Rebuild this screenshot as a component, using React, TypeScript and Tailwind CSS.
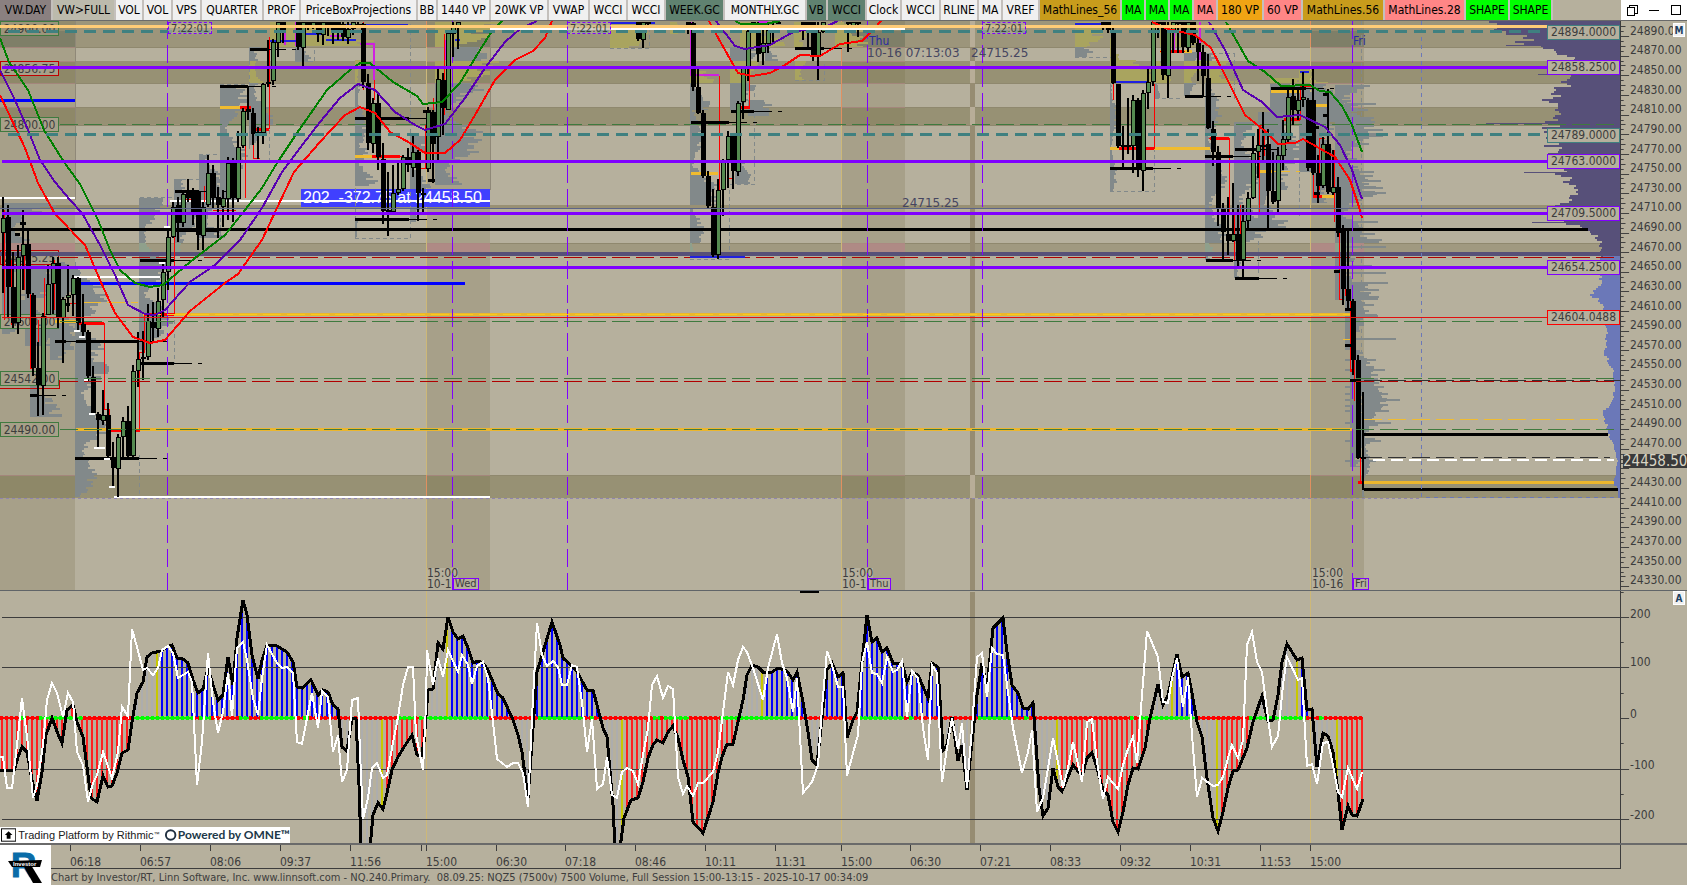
import React from 'react';

type Point = [number, number];
// x, high, low, body top, body bottom, up
type Candle = [number, number, number, number, number, number];

const PLOT_W = 1620;
const PRICE = { top: 21, height: 569 };
const CCI_ZERO = 718;

const studies: { label: string; className: string }[] = [
    { label: 'VW.DAY', className: 'w-[53px] bg-[#8a8080]' },
    { label: 'VW>FULL', className: 'w-[63px] bg-[#bcbaac]' },
    { label: 'VOL', className: 'w-[28px] bg-[#f0f0f0]' },
    { label: 'VOL', className: 'w-[29px] bg-[#f0f0f0]' },
    { label: 'VPS', className: 'w-[29px] bg-[#f0f0f0]' },
    { label: 'QUARTER', className: 'w-[62px] bg-[#f0f0f0]' },
    { label: 'PROF', className: 'w-[37px] bg-[#f0f0f0]' },
    { label: 'PriceBoxProjections', className: 'w-[117px] bg-[#f0f0f0]' },
    { label: 'BB', className: 'w-[20px] bg-[#f0f0f0]' },
    { label: '1440 VP', className: 'w-[53px] bg-[#f0f0f0]' },
    { label: '20WK VP', className: 'w-[58px] bg-[#f0f0f0]' },
    { label: 'VWAP', className: 'w-[41px] bg-[#f0f0f0]' },
    { label: 'WCCI', className: 'w-[38px] bg-[#f0f0f0]' },
    { label: 'WCCI', className: 'w-[38px] bg-[#f0f0f0]' },
    { label: 'WEEK.GC', className: 'w-[59px] bg-[#608270]' },
    { label: 'MONTHLY.GC', className: 'w-[82px] bg-[#f0f0f0]' },
    { label: 'VB', className: 'w-[21px] bg-[#608270]' },
    { label: 'WCCI', className: 'w-[39px] bg-[#608270]' },
    { label: 'Clock', className: 'w-[35px] bg-[#f0f0f0]' },
    { label: 'WCCI', className: 'w-[39px] bg-[#f0f0f0]' },
    { label: 'RLINE', className: 'w-[38px] bg-[#f0f0f0]' },
    { label: 'MA', className: 'w-[24px] bg-[#f0f0f0]' },
    { label: 'VREF', className: 'w-[37px] bg-[#f0f0f0]' },
    { label: 'MathLines_56', className: 'w-[82px] bg-[#c89c1c]' },
    { label: 'MA', className: 'w-[24px] bg-[#00ff00]' },
    { label: 'MA', className: 'w-[24px] bg-[#00ff00]' },
    { label: 'MA', className: 'w-[24px] bg-[#00ff00]' },
    { label: 'MA', className: 'w-[24px] bg-[#ff8686]' },
    { label: '180 VP', className: 'w-[46px] bg-[#f0a414]' },
    { label: '60 VP', className: 'w-[39px] bg-[#ff8686]' },
    { label: 'MathLines.56', className: 'w-[82px] bg-[#c89c1c]' },
    { label: 'MathLines.28', className: 'w-[81px] bg-[#ff8686]' },
    { label: 'SHAPE', className: 'w-[44px] bg-[#00ff00]' },
    { label: 'SHAPE', className: 'w-[43px] bg-[#00ff00]' },
];

const candles: Candle[] = [
    [3, 197, 293, 218, 232, 1], [8, 205, 317, 217, 287, 0], [13, 252, 328, 287, 323, 0], [18, 245, 334, 257, 322, 1],
    [23, 210, 290, 244, 255, 1], [28, 230, 298, 244, 294, 0], [33, 293, 376, 295, 368, 0], [38, 342, 416, 368, 385, 0],
    [43, 313, 415, 316, 385, 1], [48, 265, 315, 284, 314, 1], [53, 257, 314, 263, 283, 1], [58, 257, 328, 263, 317, 0],
    [63, 297, 363, 299, 317, 1], [68, 265, 312, 295, 297, 1], [73, 275, 316, 278, 294, 1], [78, 277, 331, 278, 323, 0],
    [83, 294, 337, 324, 332, 0], [88, 330, 381, 332, 376, 0], [93, 366, 414, 377, 413, 0], [98, 412, 447, 414, 420, 0],
    [103, 390, 425, 415, 420, 1], [108, 403, 458, 415, 456, 0], [113, 442, 487, 457, 468, 0], [118, 434, 497, 437, 468, 1],
    [123, 417, 457, 421, 436, 1], [128, 406, 457, 421, 456, 0], [133, 365, 457, 371, 455, 1], [138, 332, 387, 359, 370, 1],
    [143, 331, 380, 357, 359, 0], [148, 304, 360, 321, 356, 1], [153, 302, 341, 322, 328, 0], [158, 288, 337, 301, 328, 1],
    [163, 264, 317, 272, 299, 1], [168, 226, 290, 237, 271, 1], [173, 202, 238, 207, 236, 1], [178, 197, 242, 205, 223, 0],
    [183, 190, 227, 194, 222, 1], [188, 179, 202, 191, 198, 0], [193, 188, 225, 191, 213, 0], [198, 190, 250, 192, 235, 0],
    [203, 202, 250, 207, 235, 1], [208, 155, 207, 173, 204, 1], [213, 165, 208, 173, 198, 0], [218, 187, 238, 197, 205, 0],
    [223, 190, 227, 198, 206, 1], [228, 157, 220, 163, 198, 1], [233, 158, 222, 163, 198, 0], [238, 131, 202, 147, 198, 1],
    [243, 108, 148, 111, 145, 1], [248, 86, 120, 109, 112, 0], [253, 108, 145, 113, 134, 0], [258, 127, 159, 132, 133, 0],
    [263, 83, 144, 84, 132, 1], [268, 40, 87, 82, 83, 1], [273, 39, 85, 42, 80, 1], [278, 22, 57, 22, 42, 1],
    [283, 22, 43, 22, 30, 0], [298, 22, 50, 22, 47, 0], [303, 22, 66, 22, 47, 1], [308, 22, 30, 22, 27, 0],
    [313, 22, 29, 22, 27, 1], [318, 22, 42, 22, 34, 0], [323, 22, 45, 22, 34, 1], [328, 22, 36, 22, 28, 0],
    [333, 22, 44, 22, 30, 0], [338, 22, 40, 22, 32, 0], [343, 22, 41, 24, 37, 0], [348, 22, 44, 29, 37, 1],
    [353, 22, 35, 22, 28, 1], [358, 22, 28, 24, 26, 0], [363, 23, 88, 24, 82, 0], [368, 74, 150, 83, 143, 0],
    [373, 98, 153, 103, 143, 1], [378, 93, 170, 103, 157, 0], [383, 143, 224, 159, 211, 0], [388, 172, 236, 210, 212, 0],
    [393, 165, 215, 193, 211, 1], [398, 160, 195, 189, 192, 1], [403, 155, 191, 157, 188, 1], [408, 148, 172, 157, 165, 0],
    [413, 136, 177, 152, 167, 1], [418, 150, 221, 152, 193, 0], [423, 188, 213, 193, 195, 0], [428, 107, 172, 112, 168, 1],
    [433, 110, 183, 112, 144, 0], [438, 69, 160, 79, 136, 1], [443, 73, 135, 80, 108, 0], [448, 30, 110, 33, 109, 1],
    [453, 22, 57, 27, 33, 1], [458, 22, 49, 22, 27, 1], [638, 22, 41, 22, 39, 0], [643, 22, 48, 22, 39, 1],
    [648, 22, 28, 22, 24, 0], [688, 22, 34, 22, 26, 0], [693, 22, 91, 23, 87, 0], [698, 68, 114, 87, 113, 0],
    [703, 110, 178, 113, 176, 0], [708, 171, 208, 176, 206, 0], [713, 189, 257, 207, 255, 0], [718, 179, 259, 190, 254, 1],
    [723, 159, 216, 162, 189, 1], [728, 131, 188, 136, 159, 1], [733, 133, 189, 135, 171, 0], [738, 101, 176, 103, 171, 1],
    [743, 67, 119, 68, 101, 1], [748, 29, 81, 31, 68, 1], [753, 22, 30, 22, 24, 0], [758, 22, 62, 32, 54, 0],
    [763, 28, 65, 43, 52, 1], [768, 22, 53, 30, 43, 1], [773, 22, 42, 25, 28, 1], [778, 22, 24, 22, 23, 0],
    [803, 22, 40, 22, 25, 0], [808, 22, 50, 22, 25, 0], [813, 22, 61, 22, 57, 0], [818, 22, 80, 32, 56, 1],
    [823, 22, 33, 22, 31, 1], [848, 22, 52, 22, 24, 0], [853, 22, 26, 22, 25, 1], [858, 22, 37, 22, 24, 0],
    [1103, 22, 30, 22, 28, 0], [1108, 22, 33, 22, 30, 0], [1113, 27, 84, 33, 83, 0], [1118, 84, 148, 84, 146, 0],
    [1123, 126, 168, 145, 147, 0], [1128, 98, 154, 145, 147, 0], [1133, 95, 173, 100, 145, 1], [1138, 98, 177, 100, 170, 0],
    [1143, 90, 191, 93, 170, 1], [1148, 68, 109, 82, 92, 1], [1153, 22, 86, 22, 81, 1], [1158, 22, 38, 22, 24, 0],
    [1163, 22, 80, 22, 75, 0], [1168, 22, 98, 30, 75, 1], [1173, 22, 53, 22, 30, 1], [1178, 22, 53, 22, 24, 0],
    [1183, 22, 53, 22, 47, 0], [1188, 22, 52, 22, 47, 1], [1193, 22, 45, 22, 43, 0], [1198, 38, 81, 43, 52, 0],
    [1203, 45, 97, 52, 76, 0], [1208, 54, 129, 78, 128, 0], [1213, 121, 166, 129, 152, 0], [1218, 146, 226, 152, 208, 0],
    [1223, 203, 259, 209, 232, 0], [1228, 197, 255, 234, 241, 0], [1233, 183, 242, 234, 240, 1], [1238, 205, 266, 234, 260, 0],
    [1243, 205, 277, 221, 259, 1], [1248, 192, 228, 198, 220, 1], [1253, 136, 199, 153, 197, 1], [1258, 129, 178, 145, 151, 1],
    [1263, 112, 163, 145, 146, 0], [1268, 129, 231, 144, 191, 0], [1273, 152, 204, 191, 202, 0], [1278, 147, 212, 155, 200, 1],
    [1283, 120, 170, 139, 155, 1], [1288, 90, 143, 97, 139, 1], [1293, 79, 125, 96, 110, 0], [1298, 89, 120, 100, 110, 1],
    [1303, 72, 107, 97, 99, 1], [1308, 98, 171, 100, 168, 0], [1313, 69, 175, 100, 173, 0], [1318, 155, 203, 173, 186, 0],
    [1323, 137, 188, 144, 185, 1], [1328, 89, 194, 144, 192, 0], [1333, 150, 195, 187, 192, 1], [1338, 177, 237, 187, 233, 0],
    [1343, 225, 305, 231, 289, 0], [1348, 231, 309, 289, 301, 0], [1353, 299, 375, 301, 360, 0], [1358, 355, 459, 360, 458, 0],
    [1363, 392, 490, 457, 459, 0],
];

// base x, top, bottom, reach, colour
const profiles: [number, number, number, number, string][] = [
    [2, 203, 243, 54, '#82898a'], [2, 256, 334, 34, '#82898a'], [25, 262, 346, 38, '#82898a'], [30, 386, 417, 32, '#82898a'],
    [50, 262, 360, 34, '#82898a'], [75, 278, 350, 32, '#82898a'], [75, 350, 455, 34, '#82898a'], [75, 455, 497, 22, '#82898a'],
    [139, 198, 243, 24, '#82898a'], [139, 243, 252, 14, '#8fa08c'], [139, 256, 350, 34, '#82898a'], [174, 179, 243, 34, '#82898a'],
    [174, 243, 252, 24, '#8fa08c'], [199, 155, 238, 32, '#82898a'], [220, 85, 200, 28, '#82898a'], [249, 47, 61, 28, '#82898a'],
    [249, 61, 83, 22, '#a9a45f'], [249, 83, 145, 24, '#82898a'], [270, 22, 47, 60, '#a9a45f'], [295, 47, 62, 18, '#82898a'],
    [300, 22, 46, 90, '#a9a45f'], [355, 60, 83, 12, '#a9a45f'], [355, 83, 148, 12, '#82898a'], [355, 148, 186, 26, '#82898a'],
    [355, 219, 238, 6, '#82898a'], [410, 136, 222, 22, '#82898a'], [435, 22, 47, 76, '#a9a45f'], [453, 47, 61, 34, '#82898a'],
    [435, 61, 83, 64, '#a9a45f'], [435, 83, 185, 52, '#82898a'], [610, 22, 48, 38, '#a9a45f'], [670, 22, 34, 26, '#a9a45f'],
    [690, 61, 83, 24, '#a9a45f'], [690, 83, 110, 20, '#82898a'], [690, 110, 190, 14, '#82898a'], [690, 168, 205, 32, '#82898a'],
    [690, 208, 243, 14, '#82898a'], [690, 243, 252, 8, '#8fa08c'], [730, 47, 61, 30, '#82898a'], [730, 61, 83, 28, '#a9a45f'],
    [730, 83, 110, 26, '#82898a'], [748, 100, 116, 26, '#82898a'], [735, 160, 184, 16, '#82898a'], [740, 22, 47, 60, '#a9a45f'],
    [765, 47, 61, 26, '#82898a'], [794, 22, 47, 32, '#a9a45f'], [795, 61, 80, 24, '#a9a45f'], [835, 22, 47, 34, '#a9a45f'],
    [1075, 22, 47, 28, '#a9a45f'], [1075, 47, 57, 18, '#82898a'], [1110, 38, 83, 16, '#a9a45f'], [1110, 83, 191, 7, '#82898a'],
    [1118, 60, 83, 44, '#a9a45f'], [1155, 61, 83, 22, '#a9a45f'], [1155, 83, 98, 10, '#82898a'], [1184, 52, 61, 34, '#82898a'],
    [1160, 22, 47, 60, '#a9a45f'], [1184, 61, 83, 40, '#a9a45f'], [1184, 83, 96, 18, '#82898a'], [1205, 53, 61, 30, '#82898a'],
    [1210, 61, 83, 50, '#a9a45f'], [1205, 83, 150, 18, '#82898a'], [1205, 150, 243, 22, '#82898a'], [1205, 243, 252, 20, '#8fa08c'],
    [1205, 252, 260, 14, '#82898a'], [1234, 122, 243, 32, '#82898a'], [1234, 252, 278, 16, '#82898a'], [1258, 112, 230, 30, '#82898a'],
    [1270, 78, 83, 34, '#a9a45f'], [1270, 84, 190, 38, '#82898a'], [1299, 70, 83, 50, '#a9a45f'], [1299, 84, 172, 56, '#82898a'],
    [1312, 84, 203, 46, '#82898a'], [1335, 85, 243, 48, '#82898a'], [1335, 243, 252, 40, '#8fa08c'], [1335, 252, 300, 44, '#82898a'],
    [1345, 300, 350, 32, '#82898a'], [1350, 350, 467, 28, '#82898a'], [1363, 380, 432, 26, '#82898a'], [1362, 432, 497, 8, '#82898a'],
];

const profileSpikes: Point[] = [
    [104, 1376], [110, 1368], [162, 1377], [172, 1374], [181, 1381], [187, 1376], [193, 1386], [222, 1378], [247, 1386],
    [266, 1372], [273, 1386], [283, 1388], [290, 1379], [316, 1378], [339, 1396], [360, 1376], [370, 1385], [387, 1384],
    [394, 1388], [400, 1400], [406, 1383], [411, 1389], [423, 1391], [441, 1381], [461, 1376],
];

const greenMa: Point[][] = [
    [[0, 38], [9, 62], [28, 90], [44, 130], [64, 162], [80, 184], [98, 220], [110, 250], [120, 270], [135, 283], [150, 287], [163, 285], [190, 262], [225, 235], [245, 210], [262, 188], [277, 163], [297, 133], [327, 90], [350, 70], [360, 63], [370, 63], [393, 82], [417, 96], [423, 104], [442, 102], [460, 83], [480, 50], [492, 31], [502, 21]],
    [[735, 21], [741, 24], [765, 24], [780, 21]],
    [[1226, 22], [1248, 61], [1265, 72], [1281, 86], [1310, 85], [1320, 91], [1330, 92], [1342, 106], [1352, 125], [1362, 152]],
];
const purpleMa: Point[][] = [
    [[0, 70], [15, 100], [28, 130], [40, 160], [55, 182], [70, 200], [82, 213], [100, 245], [115, 275], [128, 305], [145, 314], [155, 315], [165, 310], [190, 282], [215, 265], [240, 240], [262, 208], [282, 172], [300, 148], [320, 122], [340, 98], [358, 84], [375, 90], [395, 112], [415, 125], [425, 130], [445, 124], [465, 98], [485, 68], [505, 42], [520, 29], [537, 21]],
    [[716, 21], [735, 46], [745, 49], [770, 45], [795, 31], [820, 29], [838, 21]],
    [[1209, 22], [1225, 50], [1243, 90], [1262, 102], [1277, 117], [1300, 115], [1325, 127], [1340, 145], [1352, 170], [1362, 199]],
];
const redMa: Point[][] = [
    [[0, 95], [25, 148], [38, 183], [55, 214], [85, 245], [100, 280], [115, 313], [133, 337], [150, 343], [165, 340], [190, 311], [225, 283], [238, 274], [262, 240], [277, 208], [294, 172], [320, 142], [345, 115], [360, 107], [375, 113], [390, 132], [410, 143], [425, 153], [445, 153], [460, 140], [475, 115], [495, 80], [515, 60], [533, 51], [545, 38], [552, 21]],
    [[709, 21], [721, 43], [738, 73], [752, 76], [770, 73], [785, 65], [800, 55], [820, 56], [840, 44], [862, 41], [873, 30], [881, 21]],
    [[1152, 22], [1168, 29], [1195, 35], [1211, 48], [1225, 75], [1245, 115], [1265, 131], [1278, 144], [1295, 143], [1303, 139], [1335, 157], [1350, 180], [1359, 207], [1362, 218]],
];

// y, x start, x end
const valueLines: [number, number, number][] = [
    [49, 250, 268], [86, 220, 248], [118, 355, 409], [219, 355, 409], [341, 76, 139], [458, 75, 139], [363, 139, 174],
    [260, 140, 174], [230, 174, 219], [191, 175, 198], [122, 691, 729], [111, 731, 754], [48, 795, 824], [168, 1110, 1153],
    [156, 1205, 1233], [260, 1206, 1233], [278, 1235, 1259], [149, 1235, 1259], [96, 1185, 1203], [88, 1271, 1306],
    [395, 30, 38], [341, 55, 66],
];

const cciSlow: Point[] = [
    [0, 770], [14, 771], [18, 757], [22, 747], [27, 752], [32, 780], [37, 801], [42, 772], [46, 735], [52, 718], [58, 734], [62, 743], [67, 710], [73, 705], [77, 722], [83, 737], [87, 767], [91, 798], [97, 802], [103, 776], [108, 787], [112, 786], [117, 773], [122, 753], [128, 750], [132, 722], [137, 693], [143, 682], [147, 657], [152, 653], [161, 651], [167, 647], [172, 645], [177, 658], [183, 659], [188, 663], [193, 680], [198, 693], [203, 689], [208, 668], [213, 685], [218, 700], [223, 695], [228, 657], [233, 685], [237, 638], [243, 600], [247, 615], [252, 655], [258, 679], [262, 660], [267, 645], [277, 646], [287, 652], [293, 662], [297, 687], [302, 688], [311, 680], [318, 695], [323, 690], [328, 692], [333, 705], [338, 709], [342, 747], [347, 751], [352, 718], [356, 718], [359, 785], [361, 848], [370, 848], [373, 815], [378, 803], [383, 809], [387, 793], [392, 770], [398, 757], [404, 747], [412, 735], [417, 755], [421, 757], [424, 742], [428, 690], [433, 689], [438, 643], [443, 649], [448, 617], [453, 632], [458, 639], [463, 636], [468, 648], [473, 663], [478, 661], [483, 663], [488, 670], [498, 694], [503, 698], [513, 720], [518, 735], [522, 752], [528, 798], [532, 742], [537, 672], [543, 652], [552, 622],
    [560, 645], [563, 658], [576, 670], [587, 690], [593, 690], [603, 728], [607, 737], [613, 805], [615, 848], [620, 848], [624, 818], [631, 800], [638, 798], [643, 782], [648, 758], [653, 745], [657, 740], [663, 743], [668, 732], [673, 726], [678, 738], [683, 760], [688, 777], [693, 822], [703, 833], [713, 802], [718, 773], [722, 757], [727, 744], [733, 744], [738, 722], [743, 700], [747, 675], [752, 665], [758, 667], [763, 672], [772, 672], [778, 668], [787, 671], [793, 680], [797, 672], [803, 702], [808, 732], [812, 760], [817, 765], [822, 718], [827, 670], [832, 663], [838, 677], [843, 673], [847, 738], [853, 720], [857, 712], [862, 662], [867, 615], [872, 642], [877, 638], [882, 652], [887, 648], [893, 663], [902, 663], [907, 682], [912, 672], [918, 675], [928, 698], [932, 663], [938, 667], [943, 750], [947, 745], [952, 717], [958, 761], [962, 745], [967, 790], [972, 742], [977, 695], [982, 663], [987, 688], [993, 628], [1003, 618], [1007, 652], [1012, 685], [1018, 693], [1023, 708], [1028, 709], [1033, 703], [1036, 745], [1039, 788], [1043, 816], [1048, 808], [1053, 768], [1058, 787], [1062, 791], [1073, 765], [1082, 776], [1087, 758], [1092, 753], [1097, 768], [1103, 790], [1108, 795], [1113, 822], [1118, 832],
    [1123, 812], [1128, 785], [1133, 768], [1138, 769], [1145, 748], [1150, 718], [1158, 684], [1163, 705], [1168, 695], [1177, 654], [1182, 677], [1188, 673], [1192, 693], [1197, 722], [1202, 737], [1207, 778], [1213, 818], [1218, 831], [1223, 812], [1228, 788], [1233, 771], [1238, 770], [1247, 748], [1253, 722], [1262, 696], [1268, 721], [1273, 720], [1278, 695], [1282, 662], [1287, 644], [1297, 660], [1302, 658], [1307, 710], [1312, 709], [1317, 767], [1323, 733], [1328, 736], [1333, 752], [1338, 792], [1342, 830], [1348, 806], [1352, 815], [1357, 816], [1363, 799],
];

const cciFast: Point[] = [
    [0, 757], [3, 757], [7, 788], [12, 788], [17, 745], [22, 698], [28, 745], [33, 798], [37, 785], [43, 745], [47, 700], [52, 683], [57, 693], [63, 717], [68, 693], [73, 702], [77, 752], [83, 765], [88, 802], [93, 783], [97, 775], [103, 752], [112, 778], [118, 752], [122, 707], [128, 716], [132, 629], [137, 647], [143, 670], [147, 668], [153, 675], [158, 668], [162, 650], [168, 646], [173, 653], [178, 678], [188, 672], [192, 682], [197, 785], [202, 742], [208, 653], [213, 702], [218, 733], [223, 712], [228, 673], [232, 716], [237, 648], [243, 642], [247, 660], [253, 698], [258, 715], [262, 678], [267, 645], [277, 663], [282, 668], [287, 667], [293, 673], [297, 742], [302, 744], [307, 718], [312, 693], [318, 728], [322, 691], [328, 697], [333, 752], [338, 735], [342, 782], [347, 770], [352, 700], [358, 698], [360, 752], [363, 819], [368, 798], [372, 768], [377, 763], [383, 778], [387, 775], [392, 748], [398, 717], [403, 685], [408, 667], [413, 667], [416, 735], [423, 770], [426, 705], [427, 650], [433, 685], [438, 658], [443, 677], [448, 650], [458, 672], [462, 655], [468, 665], [472, 684], [477, 666], [483, 662], [488, 678], [493, 722], [497, 759], [507, 767], [513, 763], [518, 763], [523, 773], [528, 807], [532, 718], [537, 623], [542, 655], [547, 666], [553, 661], [558, 667],
    [562, 685], [567, 685], [572, 665], [577, 667], [582, 702], [587, 752], [592, 719], [597, 789], [603, 784], [607, 757], [612, 795], [617, 798], [622, 772], [627, 768], [633, 771], [638, 784], [643, 755], [648, 728], [652, 685], [657, 676], [663, 698], [668, 686], [673, 689], [678, 777], [683, 794], [687, 786], [693, 796], [698, 783], [703, 783], [713, 772], [718, 752], [723, 712], [728, 672], [733, 685], [738, 660], [743, 647], [747, 652], [753, 668], [763, 700], [768, 668], [777, 634], [782, 663], [787, 678], [793, 712], [797, 678], [803, 793], [812, 782], [818, 765], [822, 708], [827, 651], [832, 665], [838, 687], [843, 687], [847, 776], [853, 753], [858, 735], [862, 663], [867, 642], [872, 673], [877, 674], [882, 683], [887, 657], [893, 672], [897, 670], [902, 661], [907, 717], [912, 671], [918, 678], [923, 728], [928, 760], [932, 665], [937, 673], [942, 782], [947, 748], [952, 718], [958, 749], [962, 723], [967, 788], [972, 728], [977, 657], [982, 653], [987, 697], [992, 648], [997, 654], [1003, 655], [1007, 685], [1013, 728], [1022, 773], [1028, 752], [1032, 730], [1037, 812], [1043, 798], [1053, 738], [1058, 762], [1063, 788], [1068, 768], [1073, 742], [1082, 782], [1087, 722], [1092, 719], [1097, 762], [1103, 799], [1108, 777], [1118, 789],
    [1123, 765], [1127, 752], [1133, 737], [1137, 763], [1142, 695], [1147, 631], [1158, 657], [1163, 702], [1168, 703], [1172, 678], [1177, 658], [1183, 707], [1188, 677], [1192, 735], [1197, 797], [1202, 778], [1213, 786], [1218, 785], [1223, 777], [1228, 758], [1232, 745], [1238, 758], [1243, 740], [1247, 645], [1252, 632], [1257, 662], [1262, 672], [1268, 718], [1272, 747], [1278, 736], [1283, 685], [1287, 657], [1298, 680], [1302, 678], [1307, 766], [1312, 764], [1317, 784], [1323, 743], [1328, 742], [1333, 765], [1338, 792], [1342, 797], [1348, 768], [1357, 789], [1362, 772],
];

const BLUE = '#0000ff';
const RED = '#ff2020';
const GRAY = '#adadad';
const YELLOW = '#c8c800';
// last x of each run of bars
const barRuns: [number, string][] = [
    [132, RED], [152, GRAY], [157, YELLOW], [338, BLUE], [378, GRAY], [382, YELLOW], [423, RED], [443, GRAY], [447, YELLOW],
    [508, BLUE], [534, GRAY], [598, BLUE], [618, GRAY], [622, YELLOW], [738, RED], [758, GRAY], [762, YELLOW], [803, BLUE],
    [823, GRAY], [843, BLUE], [858, GRAY], [938, BLUE], [973, GRAY], [1033, BLUE], [1053, GRAY], [1057, YELLOW], [1148, RED],
    [1168, GRAY], [1172, YELLOW], [1193, BLUE], [1213, GRAY], [1217, YELLOW], [1248, RED], [1293, GRAY], [1297, YELLOW],
    [1308, BLUE], [1333, GRAY], [1337, YELLOW], [1363, RED],
];
// the zero line alternates red and green at these x values
const zeroSwitches = [
    0, 20, 26, 39, 83, 131, 193, 199, 211, 239, 249, 260, 297, 303, 309, 398, 414, 419, 489, 538, 584, 590, 594, 653, 660, 664,
    689, 720, 799, 859, 904, 909, 914, 978, 1013, 1024, 1029, 1130, 1134, 1140, 1197, 1249, 1306, 1319, 1324, 1363,
];

const priceLabels = Array.from({ length: 29 }, (_, i) => (24890 - i * 20).toFixed(2));
const times = [
    { x: 70, label: '06:18' }, { x: 140, label: '06:57' }, { x: 210, label: '08:06' }, { x: 280, label: '09:37' },
    { x: 350, label: '11:56' }, { x: 421, label: '' }, { x: 426, label: '15:00' }, { x: 496, label: '06:30' },
    { x: 565, label: '07:18' }, { x: 635, label: '08:46' }, { x: 705, label: '10:11' }, { x: 775, label: '11:31' },
    { x: 841, label: '15:00' }, { x: 910, label: '06:30' }, { x: 980, label: '07:21' }, { x: 1050, label: '08:33' },
    { x: 1120, label: '09:32' }, { x: 1190, label: '10:31' }, { x: 1260, label: '11:53' }, { x: 1310, label: '15:00' },
];

const leftTags = [
    { y: 21, text: '24900.00', className: 'border-[#3f7a3f] bg-[#9c957b]' },
    { y: 61, text: '24856.75', className: 'border-[#c00000] bg-[#a7a089]' },
    { y: 117, text: '24800.00', className: 'border-[#3f7a3f] bg-[#a7a089]' },
    { y: 250, text: '24665.25', className: 'border-[#c00000] bg-[#a7a089]' },
    { y: 314, text: '24600.00', className: 'border-[#3f7a3f] bg-[#a7a089]' },
    { y: 371, text: '24542.00', className: 'border-[#3f7a3f] bg-[#a7a089]' },
    { y: 422, text: '24490.00', className: 'border-[#3f7a3f] bg-[#a7a089]' },
];
const rightTags = [
    { y: 25, text: '24894.0000', className: 'border-[#3f8080]' },
    { y: 60, text: '24858.2500', className: 'border-[#8000ff]' },
    { y: 128, text: '24789.0000', className: 'border-[#3f8080]' },
    { y: 154, text: '24763.0000', className: 'border-[#8000ff]' },
    { y: 206, text: '24709.5000', className: 'border-[#8000ff]' },
    { y: 260, text: '24654.2500', className: 'border-[#8000ff]' },
    { y: 310, text: '24604.0488', className: 'border-[#ff0000]' },
];
const sessions = [
    { x: 427, date: '10-15', day: 'Wed', dayX: 453 },
    { x: 842, date: '10-16', day: 'Thu', dayX: 868 },
    { x: 1312, date: '10-16', day: 'Fri', dayX: 1353 },
];

const left = (x: number) => `${(x / PLOT_W) * 100}%`;
const top = (y: number) => `${((y - PRICE.top) / PRICE.height) * 100}%`;
const toPoints = (pts: Point[]) => pts.map((p) => p.join(',')).join(' ');
const noise = (n: number) => {
    const v = Math.sin(n * 12.9898) * 43758.5453;
    return v - Math.floor(v);
};

function lineAt(pts: Point[], x: number) {
    for (let i = 1; i < pts.length; i++) {
        if (pts[i][0] >= x) {
            const [x0, y0] = pts[i - 1];
            const [x1, y1] = pts[i];
            return y0 + ((y1 - y0) * (x - x0)) / (x1 - x0 || 1);
        }
    }
    return pts[pts.length - 1][1];
}

function profilePath(x: number, y0: number, y1: number, reach: number) {
    let d = `M${x},${y0}`;
    for (let y = y0; y < y1; y += 2) {
        const hump = 0.6 + 0.35 * Math.sin((y - y0) / 9 + x);
        const w = Math.round(reach * Math.min(1, hump * (0.6 + 0.6 * noise(y + x))));
        d += `L${x + w},${y}V${Math.min(y + 2, y1)}`;
    }
    return `${d}H${x}Z`;
}

function marketEdge(pts: Point[]) {
    const first = pts[0][0];
    const last = pts[pts.length - 1][0];
    let d = `M${PLOT_W},${first}`;
    for (let y = first; y < last; y += 2) {
        const x = lineAt(pts, y);
        const jag = (PLOT_W - x) * 0.25 * noise(y * 3);
        d += `L${Math.round(x + jag)},${y}v2`;
    }
    return `${d}H${PLOT_W}Z`;
}

const upperEdge: Point[] = [
    [21, 1488], [25, 1484], [31, 1480], [35, 1500], [47, 1525], [55, 1560], [60, 1572], [72, 1566], [85, 1556], [95, 1544],
    [105, 1538], [115, 1545], [130, 1540], [150, 1545], [165, 1545], [175, 1556], [190, 1574], [200, 1556], [206, 1545],
    [223, 1564], [229, 1584], [240, 1598], [256, 1599],
];
const lowerEdge: Point[] = [
    [256, 1600], [270, 1602], [285, 1596], [295, 1588], [300, 1596], [310, 1602], [330, 1606], [352, 1602], [370, 1612], [385, 1614],
    [400, 1612], [409, 1602], [418, 1602], [430, 1606], [445, 1613], [460, 1617], [478, 1614], [482, 1607], [486, 1617], [497, 1618],
];

function PriceBackdrop() {
    return (
        <svg className="block h-full w-full" viewBox="0 21 1620 569" preserveAspectRatio="none" shapeRendering="crispEdges" aria-hidden="true">
            <rect x="0" y="21" width="1620" height="26" fill="#9c957b" />
            <rect x="0" y="61" width="1620" height="22" fill="#979174" />
            <rect x="0" y="107" width="1620" height="18" fill="#979174" />
            <rect x="0" y="205" width="1620" height="4" fill="#989074" />
            <rect x="0" y="243" width="1620" height="13" fill="#a09980" />
            <rect x="0" y="475" width="1620" height="23" fill="#979174" />
            <path d="M0,47.5H1620M0,83.5H1620M0,107.5H1620M0,125.5H1620M0,243.5H1620M0,475.5H1620" stroke="#8f886e" strokeWidth="1" />
            {[[0, 75], [426, 64], [841, 64], [1310, 54]].map(([x, w]) => (
                <g key={x}>
                    <rect x={x} y="21" width={w} height="569" fill="#6e643c" fillOpacity="0.2" />
                    <rect x={x} y="31" width={w} height="16" fill="#7f7f68" />
                    <rect x={x} y="243" width={w} height="9" fill="#b58a8a" fillOpacity="0.8" />
                    <path d={`M${x},47.5h${w}M${x},61.5h${w}M${x},83.5h${w}M${x},107.5h${w}M${x},475.5h${w}`} stroke="#b58a8a" strokeOpacity="0.6" />
                </g>
            ))}
            <path d="M426.5,21V590M841.5,21V590M1310.5,21V590" stroke="#cdb878" />
            <path d="M426.5,21V47M841.5,21V125M1310.5,21V47M426.5,475V498M841.5,475V498M1310.5,475V498" stroke="#e09060" />
            <rect x="970" y="21" width="5" height="569" fill="#968c72" />
            <path d="M972.5,21V47M972.5,61V83M972.5,107V125M972.5,475V498" stroke="#b8ad98" strokeWidth="5" />
            <path d="M490.5,21V190" stroke="#8f8878" />
            <path d="M75.5,21V200" stroke="#8f8878" />
            {profiles.map(([x, y0, y1, reach, fill], i) => (
                <path key={i} d={profilePath(x, y0, y1, reach)} fill={fill} />
            ))}
            {profileSpikes.map(([y, x]) => (
                <path key={y} d={`M1345,${y}H${x}`} stroke="#82898a" strokeWidth="2" />
            ))}
            <path d="M0,388.5H59V380" fill="none" stroke="#c00000" />
        </svg>
    );
}

function PriceDrawing() {
    return (
        <svg className="pointer-events-none absolute inset-0 h-full w-full" viewBox="0 21 1620 569" preserveAspectRatio="none" shapeRendering="crispEdges" fill="none" role="img" aria-label="NQ price chart">
            <path
                d="M139.5,197H174M174.5,179H199V240M199,154.5H220V240M220,84.5H248M249.5,47V150M269.5,130V160M314.5,50V62M355.5,83V238H410V22M610,48.5H649V30M730,184.5H754V85M729.5,190V259H690M795,80.5H824V62M1075,57.5H1112M1110,191.5H1154V140M1155,98.5H1183M1205,53.5H1234V100M1258,122V275M1299.5,170V216M1361.5,21V430M75.5,262V497M139.5,455V497M174.5,320V363"
                stroke="#82898a"
                strokeDasharray="4 3"
            />
            <path d={marketEdge(upperEdge)} fill="#575079" />
            <path d="M1486,123.5H1560M1524,172.5H1570M1532,222.5H1580M1538,74.5H1570M1506,45.5H1545M1494,30.5H1520M1526,161.5H1560" stroke="#575079" strokeWidth="1" />
            <path d={marketEdge(lowerEdge)} fill="#6b78b8" />

            <rect x="0" y="252" width="1603" height="4" fill="#575078" />
            <path d="M60,257.5H1620" stroke="#b00000" strokeDasharray="18 6" />
            <path d="M60,124.5H1620" stroke="#3f7a3f" strokeDasharray="18 6" />
            <path d="M0,100.5H75M81,283.5H465" stroke="#0000ff" strokeWidth="3" />
            <path d="M0,198H75M73,277H160M170,201H490M114,497H490" stroke="#ffffff" strokeWidth="2" />
            <path d="M10,229.5H1588" stroke="#000000" strokeWidth="3" />

            <path d="M143,314.5H1350M76,429.5H1352" stroke="#ebb62d" strokeWidth="3" />
            <path d="M1364,482.5H1614" stroke="#ebb62d" strokeWidth="3" />
            <path d="M220,107H250M355,156.5H372M691,173.5H718M1110,148.5H1210M1271,91.5H1300M1314,105.5H1327M1260,171.5H1272M1313,196.5H1335M1160,51.5H1192M55,321.5H78" stroke="#f0bc30" strokeWidth="3" />
            <path d="M83,302.5H138M1272,171.5H1300M1343,339.5H1356M1364,419.5H1605" stroke="#f0bc30" strokeDasharray="18 6" />

            <path
                d="M78,323.5H104.5V409H109V431.5H139.5V352H144.5V314.5H174.5V235M4.5,210V320M11.5,260V325M24.5,255V290M30.5,290V368H34M38.5,368V320M44.5,278V316H47M54.5,260V310M62,303.5H76M183,199.5H192M204.5,186V202M213,210.5H236M245.5,198V107H251M253.5,110V158H260M269.5,129V37M363.5,22V90M374.5,43V100M372,156.5H402M418,168.5H425.5V125M433.5,98V140M444.5,34V115M691.5,40V76M719.5,76V190M729,178.5H733M749.5,60V107H741M1113.5,40V100M1120,148.5H1154.5V84M1160,51.5H1185M1209,138.5H1229.5V212M1234.5,215V260M1259.5,212V125H1264M1264.5,130V156M1284,119.5H1300V86M1300,86H1312M1313.5,105V196H1318M1319.5,190V138H1325M1334.5,150V222M1339.5,233V299H1344M1345.5,260V296M1350.5,301V370M1354.5,360V401M1360.5,458V482M1240.5,205V258"
                stroke="#ff0000"
            />
            <path d="M78,323H104M109,430.5H139M144,314.5H174M251,129.5H269M372,156.5H400M240,107H251M741,107.5H750M1119,148.5H1154M1210,138.5H1229M1284,119.5H1300M1161,51.5H1184M1313,196.5H1322M1350,370.5H1354M1358,482.5H1364" stroke="#ff0000" strokeWidth="3" />
            <path d="M360,43.5H374V80M690.5,22V75H719M284.5,22V45M295.5,22V46M445.5,40V60M1173.5,22V50M1199.5,22V60M330,36H350M758,22H768" stroke="#d020e0" strokeWidth="2" />
            <path d="M270,40.5H302M300,34H322M326,39.5H356M345,24.5H408M455,40H460M610,22.5H655M690,257H745M1075,23.5H1104M1115,81.5H1148M1300,71.5H1309" stroke="#2020e0" strokeWidth="2" />

            {valueLines.map(([y, x0, x1]) => (
                <g key={`${y}-${x0}`} stroke="#000000">
                    <path d={`M${x0},${y + 0.5}H${x1}`} strokeWidth="3" />
                    <path d={`M${x1},${y + 0.5}h28`} strokeDasharray="18 6" />
                </g>
            ))}
            <path d="M1364,380.5H1620M1364,457.5H1610" stroke="#333333" strokeDasharray="18 6" />
            <path d="M1364,434.5H1608M1364,489.5H1618" stroke="#000000" strokeWidth="3" />
            <path d="M1373,460H1614" stroke="#ffffff" strokeWidth="2" strokeDasharray="12 6" />
            <path d="M1421.5,21V497H1620" stroke="#6b78b8" strokeDasharray="4 4" />
            <path d="M0,498.5H1421" stroke="#8f84b0" strokeDasharray="3 3" />

            <path d="M167.5,21V590M452.5,21V590M567.5,21V590M867.5,21V590M982.5,21V590M1352.5,21V590" stroke="#8000ff" strokeDasharray="18 6" />

            {candles.map(([x, high, low, open, close, up]) => (
                <g key={x}>
                    <rect x={x - 1} y={high} width="2" height={low - high} fill="#000000" />
                    {up ? (
                        <rect x={x - 1.5} y={open + 0.5} width="4" height={Math.max(close - open, 1)} fill="#558a50" stroke="#000000" />
                    ) : (
                        <rect x={x - 2} y={open} width="5" height={Math.max(close - open, 2)} fill="#000000" />
                    )}
                </g>
            ))}
            <path d="M15,234.5h5M20,223.5h6M66,304h4M1311,127.5h8M1323,94.5h6M1323,115.5h6M1314,193.5h6M1334,271.5h6M1345,309.5h6M1345,345.5h6M1350,380.5h6M428,180.5h7M423,111.5h8" stroke="#000000" strokeWidth="3" />
            <path d="M74,331h6M79,337h6M84,380h4M89,414h6M94,448h11M104,459h6M109,487h6M159,263h6M164,227h6" stroke="#ffffff" strokeWidth="2" />

            <path d="M143,314.5H1350" stroke="#f7ca20" strokeDasharray="18 6" />
            <path d="M60,429.5H1620M60,378.5H1620M60,321.5H1545" stroke="#3f7a3f" strokeDasharray="18 6" />
            <path d="M60,381.5H1620" stroke="#b00000" strokeDasharray="18 6" />
            <path d="M0,208.5H1687" stroke="#5c6488" />
            <path d="M2,317.5H1548" stroke="#e01010" />

            {greenMa.map((pts, i) => <polyline key={i} points={toPoints(pts)} stroke="#008000" strokeWidth="2" />)}
            {purpleMa.map((pts, i) => <polyline key={i} points={toPoints(pts)} stroke="#5800b0" strokeWidth="2" />)}
            {redMa.map((pts, i) => <polyline key={i} points={toPoints(pts)} stroke="#ff0000" strokeWidth="2" />)}

            <path d="M0,26.5H1548" stroke="#ffcc77" strokeWidth="3" />
            <path d="M490,29H905" stroke="#ffffff" strokeWidth="2" />
            <path d="M8,31.5H1540M8,134.5H1540" stroke="#3f8080" strokeWidth="3" strokeDasharray="12 7" />
            <path d="M2,67.5H1548M2,161.5H1548M2,213.5H1548M2,267.5H1548" stroke="#8000ff" strokeWidth="3" />
        </svg>
    );
}

function CciDrawing() {
    const bars = Array.from({ length: 273 }, (_, i) => 2 + i * 5);
    return (
        <svg className="block h-full w-full" viewBox="0 591 1620 252" preserveAspectRatio="none" shapeRendering="crispEdges" fill="none" role="img" aria-label="CCI histogram">
            <path d="M426.5,591V843M841.5,591V843M1310.5,591V843" stroke="#cdb878" />
            <rect x="970" y="592" width="5" height="251" fill="#968c72" />
            <path d="M800,592H819" stroke="#000000" strokeWidth="2" />
            {bars.map((x) => {
                const run = barRuns.find(([end]) => x <= end);
                return <path key={x} d={`M${x},${CCI_ZERO}V${lineAt(cciSlow, x)}`} stroke={run ? run[1] : GRAY} strokeWidth="2" />;
            })}
            <path d="M2,617.5H1620M2,667.5H1620M2,769.5H1620M2,819.5H1620" stroke="#3c3c3c" />
            {zeroSwitches.slice(1).map((x, i) => (
                <g key={x} stroke={i % 2 ? '#00ff00' : '#ff0000'}>
                    <path d={`M${zeroSwitches[i]},${CCI_ZERO}H${x}`} strokeWidth="2" />
                    <path d={`M${zeroSwitches[i]},${CCI_ZERO}H${x}`} strokeWidth="4" strokeDasharray="3 2" />
                </g>
            ))}
            <polyline points={toPoints(cciSlow)} stroke="#000000" strokeWidth="3" />
            <polyline points={toPoints(cciFast)} stroke="#ffffff" strokeWidth="2" />
        </svg>
    );
}

function PriceTicks() {
    let d = '';
    for (let i = -2; i < 113; i++) {
        const y = 36 + i * 4.913;
        const w = i % 4 === 0 ? 9 : i % 2 === 0 ? 5 : 3;
        d += `M0,${Math.round(y) + 0.5}h${w}`;
    }
    return (
        <svg className="block h-full w-2.5 shrink-0 border-l border-[#3c3c3c]" viewBox="0 21 10 569" preserveAspectRatio="none" shapeRendering="crispEdges" aria-hidden="true">
            <path d={d} stroke="#3c3c3c" />
        </svg>
    );
}

function Toolbar() {
    return (
        <header className="flex h-[21px] shrink-0 border-b border-[#6a6a6a] bg-[#b6b09d]">
            <nav className="flex min-w-0 flex-1 overflow-hidden" aria-label="Studies">
                {studies.map((s, i) => (
                    <button key={i} type="button" className={`h-5 shrink-0 overflow-visible border-r-2 border-[#c4c0bc] text-center text-[12px] leading-5 whitespace-nowrap text-black ${s.className}`}>
                        {s.label}
                    </button>
                ))}
            </nav>
            <div className="flex w-[66px] shrink-0 items-center justify-around bg-white">
                <button type="button" aria-label="Restore">
                    <svg width="11" height="11" viewBox="0 0 11 11" fill="none" stroke="#000" shapeRendering="crispEdges">
                        <path d="M0.5,2.5h7v8h-7zM2.5,2.5v-2h8v8h-3" />
                    </svg>
                </button>
                <button type="button" aria-label="Minimize">
                    <svg width="11" height="11" viewBox="0 0 11 11" stroke="#000" shapeRendering="crispEdges">
                        <path d="M0,5.5h10" />
                    </svg>
                </button>
                <button type="button" aria-label="Maximize">
                    <svg width="11" height="11" viewBox="0 0 11 11" fill="none" stroke="#000" shapeRendering="crispEdges">
                        <path d="M0.5,0.5h9v9h-9z" />
                    </svg>
                </button>
            </div>
        </header>
    );
}

function PricePanel() {
    return (
        <section className="flex min-h-0 flex-[569]">
            <div className="relative min-w-0 flex-1 overflow-hidden">
                <PriceBackdrop />
                {leftTags.map((t) => (
                    <span key={t.text} className={`absolute left-0 h-[15px] w-[59px] border text-center text-[12px] leading-[14px] ${t.className}`} style={{ top: top(t.y) }}>
                        {t.text}
                    </span>
                ))}
                <span className="absolute h-[18px] w-[189px] bg-[#4040ff] px-0.5 font-['Liberation_Sans'] text-[16px] leading-[18px] whitespace-pre text-white" style={{ left: left(301), top: top(189) }}>
                    202  -372.75 at 24458.50
                </span>
                {sessions.map((s) => (
                    <React.Fragment key={s.day}>
                        <span className="absolute bg-[#b6b09d] text-[12px] leading-[11px]" style={{ left: left(s.x), top: top(568) }}>
                            15:00
                            <br />
                            {s.date}
                        </span>
                        <span className="absolute border border-[#8000ff] bg-[#b6b09d] px-px text-[11px] leading-[10px]" style={{ left: left(s.dayX), top: top(578) }}>
                            {s.day}
                        </span>
                    </React.Fragment>
                ))}
                <PriceDrawing />
                {[168, 567, 982].map((x) => (
                    <span key={x} className="absolute h-3 w-11 border border-dashed border-[#8000ff] bg-[#b6b09d]/60 text-center text-[11px] leading-[11px]" style={{ left: left(x), top: top(22) }}>
                        7:22:01
                    </span>
                ))}
                <span className="absolute text-[12px] leading-[12px] text-[#2a2aa0]" style={{ left: left(869), top: top(35) }}>Thu</span>
                <span className="absolute text-[12px] leading-[12px] text-[#2a2aa0]" style={{ left: left(1353), top: top(35) }}>Fri</span>
                <span className="absolute font-['DejaVu_Sans'] text-[12px] leading-[12px] whitespace-pre text-[#454560]" style={{ left: left(867), top: top(47) }}>
                    10-16 07:13:03   24715.25
                </span>
                <span className="absolute font-['DejaVu_Sans'] text-[12px] leading-[12px] text-[#454560]" style={{ left: left(902), top: top(197) }}>
                    24715.25
                </span>
                {rightTags.map((t) => (
                    <span key={t.text} className={`absolute right-0 h-[15px] w-[73px] border bg-[#b6b09d] text-center text-[12px] leading-[13px] ${t.className}`} style={{ top: top(t.y) }}>
                        {t.text}
                    </span>
                ))}
            </div>
            <div className="relative flex w-[67px] shrink-0 overflow-hidden">
                <PriceTicks />
                <ol className="flex flex-1 flex-col text-[12px] leading-none">
                    {priceLabels.map((p) => (
                        <li key={p} className="flex flex-1 items-center">{p}</li>
                    ))}
                </ol>
                <output className="absolute right-0 h-3.5 w-16 bg-[#3a3a3a] text-right text-[15px] leading-[14px] text-[#d8d4c4]" style={{ top: top(454) }}>
                    24458.50
                </output>
                <button type="button" className="absolute top-0.5 right-0.5 h-3.5 w-3 border border-white bg-[#f0f0f0] text-[10px] leading-[11px] font-bold text-[#204060]">
                    M
                </button>
            </div>
        </section>
    );
}

function CciPanel() {
    return (
        <section className="flex min-h-0 flex-[252]">
            <div className="relative min-w-0 flex-1 overflow-hidden">
                <CciDrawing />
                <div className="absolute bottom-0 left-0 flex h-4 w-[290px] items-center bg-white pl-px font-['Liberation_Sans'] whitespace-nowrap text-[#202020]">
                    <svg width="16" height="14" viewBox="0 0 16 14" aria-hidden="true">
                        <rect x="0.5" y="0.5" width="15" height="13" fill="#fff" stroke="#000" />
                        <path d="M8,3L12,7H10V11H6V7H4Z" fill="#000" />
                    </svg>
                    <span className="ml-0.5 text-[11px]">Trading Platform by Rithmic<sup className="text-[6px]">™</sup></span>
                    <svg className="ml-1" width="14" height="14" viewBox="0 0 14 14" aria-hidden="true">
                        <circle cx="7" cy="7" r="5" fill="none" stroke="#203040" strokeWidth="2" />
                    </svg>
                    <span className="ml-px font-['Lato'] text-[12px] font-bold text-[#203848]">Powered by OMNE™</span>
                </div>
            </div>
            <div className="relative flex w-[67px] shrink-0">
                <svg className="block h-full w-2.5 shrink-0 border-l border-[#3c3c3c]" viewBox="0 591 10 252" preserveAspectRatio="none" shapeRendering="crispEdges" aria-hidden="true">
                    <path d="M0,592.5h3M0,617.5h9M0,642.5h3M0,667.5h9M0,693.5h3M0,718.5h9M0,743.5h3M0,769.5h9M0,794.5h3M0,819.5h9" stroke="#3c3c3c" />
                </svg>
                <ol className="grid flex-1 grid-rows-[45fr_52fr_51fr_51fr_50fr_3fr] items-center text-[12px] leading-none">
                    {[200, 100, 0, -100, -200].map((v) => (
                        <li key={v}>{v}</li>
                    ))}
                </ol>
                <button type="button" className="absolute top-0 right-0.5 h-3.5 w-3 border border-white bg-[#f0f0f0] text-[10px] leading-[11px] font-bold text-[#204060]">
                    A
                </button>
            </div>
        </section>
    );
}

function Footer() {
    const edges = [51, ...times.map((t) => t.x), PLOT_W];
    const columns = edges.slice(1).map((x, i) => `${x - edges[i]}fr`).join(' ');
    return (
        <footer className="flex h-[42px] shrink-0 border-t-2 border-[#6a6a6a]">
            <div className="w-[51px] shrink-0 bg-white">
                <svg width="51" height="40" viewBox="0 0 51 40" role="img" aria-label="Investor/RT">
                    <text x="11" y="32" fontFamily="Liberation Sans" fontWeight="bold" fontSize="35" fill="#0a6ca8" stroke="#0a6ca8">R</text>
                    <path d="M23,20H31L42,38H33Z" fill="#000" />
                    <path d="M8,16L42,15L40,22H12Z" fill="#000" />
                    <text x="13" y="21" fontFamily="Liberation Sans" fontWeight="bold" fontSize="6" fill="#fff">Investor</text>
                </svg>
            </div>
            <div className="min-w-0 flex-1">
                <div className="mr-[66px] grid h-6 border-r border-b border-[#3c3c3c]" style={{ gridTemplateColumns: columns }}>
                    <span />
                    {times.map((t) => (
                        <div key={t.x} className="min-w-0">
                            <div className="h-1.5 w-px bg-[#3c3c3c]" />
                            <time className="block pt-1 text-[12px] leading-[14px]">{t.label}</time>
                        </div>
                    ))}
                </div>
                <p className="pt-0.5 text-[11px] leading-[14px] whitespace-pre">
                    Chart by Investor/RT, Linn Software, Inc. www.linnsoft.com - NQ.240.Primary.  08.09.25: NQZ5 (7500v) 7500 Volume, Full Session 15:00-13:15 - 2025-10-17 00:34:09
                </p>
            </div>
        </footer>
    );
}

export default function App() {
    return (
        <main className="flex h-screen flex-col overflow-hidden bg-[#b6b09d] font-['DejaVu_Sans_Condensed','DejaVu_Sans',sans-serif] text-[#3c3c3c]">
            <Toolbar />
            <PricePanel />
            <div className="h-px shrink-0 bg-[#606468]" />
            <CciPanel />
            <Footer />
        </main>
    );
}
